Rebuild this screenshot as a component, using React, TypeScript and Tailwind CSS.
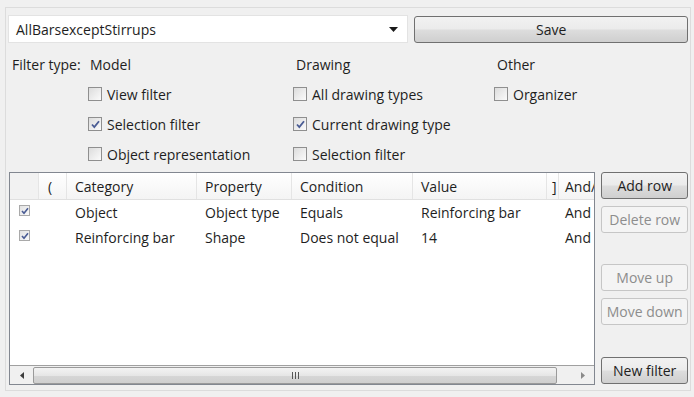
function Check({ checked }: { checked?: boolean }) {
  return (
    <span className="w-[14px] h-[14px] shrink-0 border border-[#8f8f8f] bg-gradient-to-br from-[#dcdcdc] to-[#fbfbfb] flex items-center justify-center">
      {checked && (
        <svg width="9" height="9" viewBox="0 0 9 9">
          <path d="M1 4.5 L3.3 7 L8 1.2" stroke="#4a5c94" strokeWidth="1.8" fill="none" />
        </svg>
      )}
    </span>
  );
}

function SmallCheck() {
  return (
    <span className="w-[11px] h-[11px] border border-[#a9a9a9] bg-gradient-to-br from-[#e2e2e2] to-[#fafafa] flex items-center justify-center">
      <svg width="8" height="8" viewBox="0 0 8 8">
        <path d="M1 4 L3 6.3 L7 1.2" stroke="#4a5c94" strokeWidth="1.6" fill="none" />
      </svg>
    </span>
  );
}

function Option({ label, checked }: { label: string; checked?: boolean }) {
  return (
    <div className="h-[30px] flex items-center gap-[5px]">
      <Check checked={checked} />
      <span>{label}</span>
    </div>
  );
}

function SideButton({ label, disabled }: { label: string; disabled?: boolean }) {
  return disabled ? (
    <div className="h-[27px] rounded-[3px] border border-[#c6c6c6] bg-[#f4f4f4] text-[#8d8d8d] flex items-center justify-center">
      {label}
    </div>
  ) : (
    <div className="h-[27px] rounded-[3px] border border-[#707070] bg-[linear-gradient(#f2f2f2_0%,#ebebeb_48%,#dddddd_52%,#cfcfcf_100%)] flex items-center justify-center">
      {label}
    </div>
  );
}

const cols = [
  { label: '', w: 'w-[29px]', pl: 'pl-[8px]' },
  { label: '(', w: 'w-[28px]', pl: 'pl-[9px]' },
  { label: 'Category', w: 'w-[130px]', pl: 'pl-[8px]' },
  { label: 'Property', w: 'w-[95px]', pl: 'pl-[8px]' },
  { label: 'Condition', w: 'w-[121px]', pl: 'pl-[8px]' },
  { label: 'Value', w: 'w-[134px]', pl: 'pl-[8px]' },
  { label: ']', w: 'w-[12px]', pl: 'pl-[5px]' },
  { label: 'And/', w: 'w-[36px]', pl: 'pl-[6px]' },
];

const rows = [
  ['Object', 'Object type', 'Equals', 'Reinforcing bar', 'And'],
  ['Reinforcing bar', 'Shape', 'Does not equal', '14', 'And'],
];

export default function App() {
  return (
    <div className="w-[694px] h-[397px] bg-[#f0f0f0] pt-[7px] pl-[5px] font-['Open_Sans',sans-serif] text-[14px] text-[#1e1e1e] overflow-hidden">
      <div className="w-[686px] h-[384px] border border-[#dcdcdc] px-[2px] pt-[7px]">
        {/* top row */}
        <div className="flex gap-[6px]">
          <div className="w-[401px] h-[28px] bg-white border border-[#e3e3e3] flex items-center justify-between pl-[7px] pr-[9px]">
            <span>AllBarsexceptStirrups</span>
            <svg width="9" height="5" viewBox="0 0 9 5">
              <path d="M0 0 H9 L4.5 5 Z" fill="#1a1a1a" />
            </svg>
          </div>
          <div className="w-[274px] mt-[1px] h-[27px] rounded-[3px] border border-[#707070] bg-[linear-gradient(#f2f2f2_0%,#ebebeb_48%,#dddddd_52%,#cfcfcf_100%)] flex items-center justify-center">
            Save
          </div>
        </div>

        {/* filter type */}
        <div className="grid grid-cols-[76px_205px_201px_1fr] pl-[4px] mt-[7px]">
          <div className="h-[28px] flex items-center">Filter type:</div>
          <div className="h-[28px] flex items-center pl-[2px]">Model</div>
          <div className="h-[28px] flex items-center pl-[3px]">Drawing</div>
          <div className="h-[28px] flex items-center pl-[3px]">Other</div>

          <div />
          <div className="pt-[1px]">
            <Option label="View filter" />
            <Option label="Selection filter" checked />
            <Option label="Object representation" />
          </div>
          <div className="pt-[1px]">
            <Option label="All drawing types" />
            <Option label="Current drawing type" checked />
            <Option label="Selection filter" />
          </div>
          <div className="pt-[1px]">
            <Option label="Organizer" />
          </div>
        </div>

        {/* table + buttons */}
        <div className="flex gap-[6px] mt-[3px] pl-[1px]">
          <div className="w-[589px] h-[213px] border border-[#828790] bg-white flex flex-col overflow-hidden">
            <div className="flex h-[27px] border-b border-[#e0e0e0] bg-[linear-gradient(#ffffff,#f4f4f4)] shrink-0">
              {cols.map((c, i) => (
                <div
                  key={i}
                  className={`${c.w} ${c.pl} shrink-0 h-full flex items-center border-r border-[#e5e5e5] whitespace-nowrap ${i === 0 ? 'bg-[#f2f2f2]' : ''}`}
                >
                  {c.label}
                </div>
              ))}
            </div>
            <div className="flex-1">
              {rows.map((r, i) => (
                <div key={i} className="flex h-[25px] items-center whitespace-nowrap">
                  <div className="w-[29px] shrink-0 flex justify-center pb-[4px]">
                    <SmallCheck />
                  </div>
                  <div className="w-[28px] shrink-0" />
                  <div className="w-[130px] shrink-0 pl-[8px]">{r[0]}</div>
                  <div className="w-[95px] shrink-0 pl-[8px]">{r[1]}</div>
                  <div className="w-[121px] shrink-0 pl-[8px]">{r[2]}</div>
                  <div className="w-[134px] shrink-0 pl-[8px]">{r[3]}</div>
                  <div className="w-[12px] shrink-0" />
                  <div className="w-[36px] shrink-0 pl-[6px]">{r[4]}</div>
                </div>
              ))}
            </div>
            {/* horizontal scrollbar */}
            <div className="h-[19px] border-t border-[#a0a0a0] bg-[#f0f0f0] flex items-center shrink-0">
              <div className="w-[23px] h-full flex items-center justify-center">
                <svg width="4" height="7" viewBox="0 0 4 7">
                  <path d="M4 0 V7 L0 3.5 Z" fill="#3c3c3c" />
                </svg>
              </div>
              <div className="w-[524px] h-[17px] rounded-[2px] border border-[#9a9a9a] bg-[linear-gradient(#f3f3f3,#e6e6e6_50%,#d6d6d6_51%,#cfcfcf)] flex items-center justify-center">
                <div className="flex gap-[2px]">
                  <span className="w-[1px] h-[7px] bg-[#555]" />
                  <span className="w-[1px] h-[7px] bg-[#555]" />
                  <span className="w-[1px] h-[7px] bg-[#555]" />
                </div>
              </div>
              <div className="flex-1" />
              <div className="w-[23px] h-full flex items-center justify-center">
                <svg width="4" height="7" viewBox="0 0 4 7">
                  <path d="M0 0 V7 L4 3.5 Z" fill="#8a8a8a" />
                </svg>
              </div>
            </div>
          </div>

          <div className="w-[87px] flex flex-col">
            <SideButton label="Add row" />
            <div className="mt-[7px]">
              <SideButton label="Delete row" disabled />
            </div>
            <div className="mt-[31px]">
              <SideButton label="Move up" disabled />
            </div>
            <div className="mt-[7px]">
              <SideButton label="Move down" disabled />
            </div>
            <div className="mt-auto mb-[1px]">
              <SideButton label="New filter" />
            </div>
          </div>
        </div>
      </div>
    </div>
  );
}
